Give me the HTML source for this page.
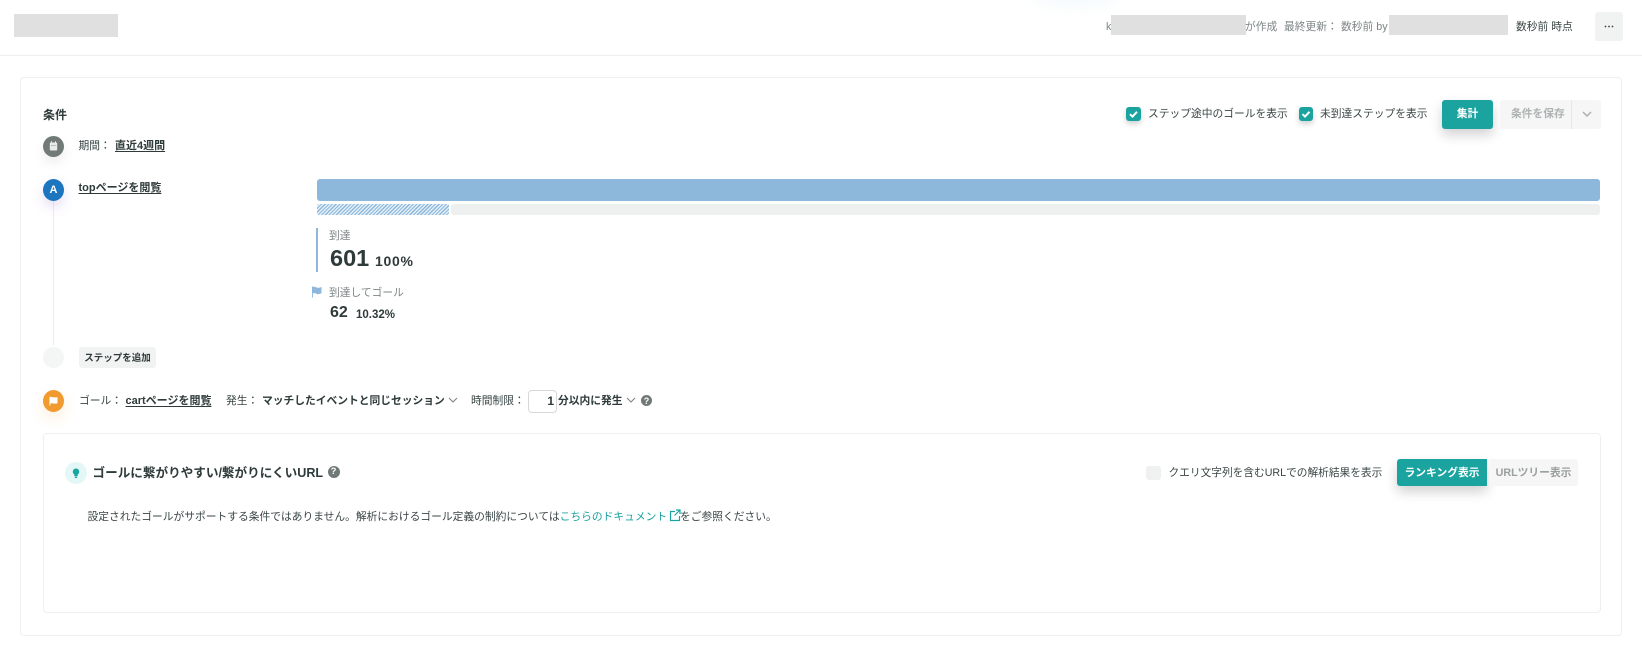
<!DOCTYPE html>
<html lang="ja">
<head>
<meta charset="utf-8">
<title>ファネル</title>
<style>
html,body{margin:0;padding:0;background:#fff;}
body{width:1642px;height:649px;position:relative;overflow:hidden;font-family:"Liberation Sans","Noto Sans CJK JP",sans-serif;color:#3a4545;font-size:10.75px;}
.a{position:absolute;}
.t{position:absolute;white-space:nowrap;line-height:20px;height:20px;margin-top:1px;}
.b{font-weight:700;color:#2f3a3a;}
.u{text-decoration:underline;text-underline-offset:2px;font-weight:700;color:#2f3a3a;font-size:11px;}
.g{color:#7d8585;}
.red{position:absolute;background:#e0e0e0;}
.c{position:absolute;border-radius:50%;}
svg{position:absolute;display:block;}
</style>
</head>
<body>
<div class="a" style="left:1030px;top:-20px;width:90px;height:28px;border-radius:50%;background:#f5fbfd;filter:blur(6px);"></div>
<div class="a" style="left:0;top:55px;width:1642px;height:1px;background:#eeeeee;"></div>
<div class="red" style="left:13.500px;top:14px;width:104.500px;height:23px;"></div>

<div class="t g" style="left:1106px;top:16px;">k</div>
<div class="red" style="left:1110.500px;top:15px;width:135px;height:20px;"></div>
<div class="t g" style="left:1245px;top:16px;">が作成</div>
<div class="t g" style="left:1284px;top:16px;">最終更新：</div>
<div class="t g" style="left:1341px;top:16px;">数秒前 by</div>
<div class="red" style="left:1389px;top:15px;width:118.500px;height:20px;"></div>
<div class="t" style="left:1516px;top:16px;">数秒前 時点</div>
<div class="a" style="left:1595px;top:12px;width:28px;height:29px;background:#f1f2f2;border-radius:3px;"></div>
<svg style="left:1595px;top:12px;" width="28" height="29"><circle cx="10.500" cy="14.500" r="0.900" fill="#3a4545"/><circle cx="14" cy="14.500" r="0.900" fill="#3a4545"/><circle cx="17.500" cy="14.500" r="0.900" fill="#3a4545"/></svg>

<div class="a" style="left:20px;top:77px;width:1600px;height:557px;border:1px solid #efefef;border-radius:4px;"></div>

<div class="t b" style="left:43px;top:104px;font-size:12px;">条件</div>

<div class="a" style="left:1126px;top:107px;width:15px;height:14px;background:#1ba3a0;border-radius:3px;box-shadow:0 3px 6px rgba(0,0,0,.18);"></div>
<svg style="left:1126px;top:107px;" width="15" height="14"><path d="M4 7.200l2.500 2.400L11 4.800" fill="none" stroke="#fff" stroke-width="2"/></svg>
<div class="t" style="left:1148px;top:103px;">ステップ途中のゴールを表示</div>
<div class="a" style="left:1299px;top:107px;width:14px;height:14px;background:#1ba3a0;border-radius:3px;box-shadow:0 3px 6px rgba(0,0,0,.18);"></div>
<svg style="left:1299px;top:107px;" width="14" height="14"><path d="M3.500 7.200l2.500 2.400L10.500 4.800" fill="none" stroke="#fff" stroke-width="2"/></svg>
<div class="t" style="left:1320px;top:103px;">未到達ステップを表示</div>
<div class="a" style="left:1442px;top:100px;width:51px;height:29px;background:#1ba3a0;border-radius:3px;box-shadow:0 6px 12px rgba(0,0,0,.18);"></div>
<div class="t" style="left:1442px;top:103px;width:51px;text-align:center;color:#fff;font-weight:700;">集計</div>
<div class="a" style="left:1500px;top:100px;width:101px;height:29px;background:#f6f6f6;border-radius:3px;"></div>
<div class="a" style="left:1571px;top:100px;width:1px;height:29px;background:#e8e8e8;"></div>
<div class="t" style="left:1511px;top:103px;color:#aeb2b2;font-weight:700;">条件を保存</div>
<svg style="left:1581px;top:110px;" width="12" height="9"><path d="M2 2l4 4 4-4" fill="none" stroke="#a8adad" stroke-width="1.400"/></svg>

<div class="c" style="left:43px;top:136px;width:21px;height:21px;background:#727a78;box-shadow:0 6px 12px rgba(0,0,0,.08);"></div>
<svg style="left:43px;top:136px;" width="21" height="21"><rect x="6.800" y="6.500" width="7.400" height="8" rx="1" fill="#e9ebea"/><rect x="8" y="5.300" width="1" height="2" fill="#e9ebea"/><rect x="12" y="5.300" width="1" height="2" fill="#e9ebea"/><rect x="7.800" y="9" width="5.400" height="0.600" fill="#9aa09e"/></svg>
<div class="t" style="left:78.500px;top:135px;">期間：</div>
<div class="t u" style="left:115px;top:135px;">直近4週間</div>

<div class="a" style="left:53px;top:200px;width:1px;height:145px;background:#ececee;"></div>
<div class="c" style="left:43px;top:179px;width:21px;height:22px;background:#1b76bf;box-shadow:0 6px 12px rgba(120,80,200,.18);"></div>
<div class="t" style="left:43px;top:179px;width:21px;text-align:center;color:#fff;font-weight:700;font-size:11px;">A</div>
<div class="t u" style="left:78.500px;top:177px;">topページを閲覧</div>

<div class="a" style="left:317px;top:179px;width:1283px;height:22px;background:#8db8dc;border-radius:3px;"></div>
<div class="a" style="left:317px;top:204px;width:132px;height:11px;border-radius:2px;background:repeating-linear-gradient(135deg,#8db8dc 0,#8db8dc 1.200px,#e4eff8 1.200px,#e4eff8 2.600px);"></div>
<div class="a" style="left:451px;top:204px;width:1149px;height:11px;background:#eef0f0;border-radius:3px;"></div>

<div class="a" style="left:316px;top:228px;width:2px;height:44px;background:#8db8dc;"></div>
<div class="t g" style="left:329px;top:225px;">到達</div>
<div class="t b" style="left:330px;top:247px;font-size:23.500px;">601</div>
<div class="t b" style="left:375px;top:250px;font-size:14px;letter-spacing:.7px;">100%</div>
<svg style="left:311px;top:286px;" width="12" height="12"><path d="M1 0.500h.9v11H1zM1.900 1c2.600-.8 3.500 1 5 .9 1.300-.1 2-.4 3.600-.9v6.300c-1.600.6-2.300.9-3.600.9-1.500.1-2.400-1.700-5-.9z" fill="#8db8dc"/></svg>
<div class="t g" style="left:329px;top:282px;">到達してゴール</div>
<div class="t b" style="left:330px;top:302px;font-size:16px;">62</div>
<div class="t b" style="left:356px;top:304px;font-size:11.500px;">10.32%</div>

<div class="c" style="left:43px;top:347px;width:21px;height:21px;background:#f4f5f5;"></div>
<div class="a" style="left:79px;top:347px;width:77px;height:21px;background:#f1f2f2;border-radius:3px;"></div>
<div class="t b" style="left:79px;top:348px;width:77px;text-align:center;font-size:9.500px;">ステップを追加</div>

<div class="c" style="left:43px;top:390px;width:21px;height:22px;background:#f09a2f;box-shadow:0 6px 14px rgba(240,154,47,.18);"></div>
<svg style="left:43px;top:390px;" width="21" height="22"><path d="M6.500 6.800h1v.4c2.500-.7 3.500.7 7 0v6.200c-3.500.7-4.500-.7-7 0v2.100h-1z" fill="#fff"/></svg>
<div class="t" style="left:79px;top:390px;">ゴール：</div>
<div class="t u" style="left:125.500px;top:390px;">cartページを閲覧</div>
<div class="t" style="left:226px;top:390px;">発生：</div>
<div class="t b" style="left:262px;top:390px;">マッチしたイベントと同じセッション</div>
<svg style="left:448px;top:397px;" width="10" height="7"><path d="M1 1l4 4 4-4" fill="none" stroke="#7d8585" stroke-width="1.100"/></svg>
<div class="t" style="left:471px;top:390px;">時間制限：</div>
<div class="a" style="left:528px;top:390px;width:27px;height:21px;border:1px solid #d6d8d8;border-radius:4px;"></div>
<div class="t b" style="left:528px;top:390px;width:26px;text-align:right;font-size:12px;">1</div>
<div class="t b" style="left:558px;top:390px;">分以内に発生</div>
<svg style="left:626px;top:397px;" width="10" height="7"><path d="M1 1l4 4 4-4" fill="none" stroke="#7d8585" stroke-width="1.100"/></svg>
<div class="c" style="left:641px;top:395px;width:11px;height:11px;background:#717978;"></div>
<div class="t" style="left:641px;top:389.500px;width:11px;text-align:center;color:#fff;font-weight:700;font-size:9px;">?</div>

<div class="a" style="left:43px;top:433px;width:1556px;height:178px;border:1px solid #efefef;border-radius:4px;"></div>
<div class="c" style="left:65px;top:462px;width:22px;height:22px;background:#e3f7f7;"></div>
<svg style="left:65px;top:462px;" width="22" height="22"><path d="M11 6.500a3.200 3.200 0 0 1 1.700 5.900v1.600h-3.400v-1.600A3.200 3.200 0 0 1 11 6.500z" fill="#1ba3a0"/><rect x="9.800" y="14.500" width="2.400" height="1.500" fill="#1ba3a0"/></svg>
<div class="t b" style="left:92.500px;top:462px;font-size:12.600px;">ゴールに繋がりやすい/繋がりにくいURL</div>
<div class="c" style="left:327.500px;top:466px;width:12px;height:12px;background:#717978;"></div>
<div class="t" style="left:327.500px;top:461px;width:12px;text-align:center;color:#fff;font-weight:700;font-size:9.500px;">?</div>

<div class="a" style="left:1146px;top:466px;width:15px;height:14px;background:#eff1f1;border-radius:3px;"></div>
<div class="t" style="left:1168.500px;top:462px;font-size:10.700px;">クエリ文字列を含むURLでの解析結果を表示</div>
<div class="a" style="left:1397px;top:459px;width:90px;height:27px;background:#1ba3a0;border-radius:3px 0 0 3px;box-shadow:0 6px 12px rgba(0,0,0,.18);"></div>
<div class="t" style="left:1397px;top:462px;width:90px;text-align:center;color:#fff;font-weight:700;">ランキング表示</div>
<div class="a" style="left:1489px;top:459px;width:89px;height:27px;background:#f6f6f6;border-radius:0 3px 3px 0;"></div>
<div class="t" style="left:1489px;top:462px;width:89px;text-align:center;color:#9a9f9f;font-weight:700;">URLツリー表示</div>

<div class="t" style="left:87.500px;top:506px;font-size:10.750px;">設定されたゴールがサポートする条件ではありません。解析におけるゴール定義の制約については<span style="color:#1ba3a0;">こちらのドキュメント</span></div>
<svg style="left:669px;top:509px;" width="12" height="13"><path d="M6 2.500H1.500v9h9V7M7 1h4v4M11 1L5.500 6.500" fill="none" stroke="#1ba3a0" stroke-width="1.200"/></svg>
<div class="t" style="left:680px;top:506px;font-size:10.750px;">をご参照ください。</div>
</body>
</html>
